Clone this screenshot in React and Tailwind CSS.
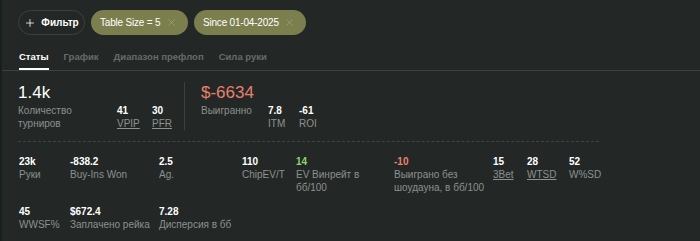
import { X, Plus } from "lucide-react";

const row = [
  { v: "23k", l: "Руки" },
  { v: "-838.2", l: "Buy-Ins Won" },
  { v: "2.5", l: "Ag." },
  { v: "110", l: "ChipEV/T" },
  { v: "14", l: "EV Винрейт в бб/100", c: "text-[#8fd46c]" },
  { v: "-10", l: "Выиграно без шоудауна, в бб/100", c: "text-[#e6806f]" },
  { v: "15", l: "3Bet", u: true },
  { v: "28", l: "WTSD", u: true },
  { v: "52", l: "W%SD" },
  { v: "45", l: "WWSF%" },
  { v: "$672.4", l: "Заплачено рейка" },
  { v: "7.28", l: "Дисперсия в бб" },
];

function Chip({ text, w }) {
  return (
    <div className={`flex h-[25px] items-center justify-between rounded-full bg-[#7b7f4e] pl-[9px] pr-[11px] text-[10px] tracking-[-0.2px] text-white ${w}`}>
      <span>{text}</span>
      <X className="h-[11px] w-[11px] text-[#a3a67c]" strokeWidth={1.5} />
    </div>
  );
}

export default function App() {
  return (
    <div
      className="h-[241px] w-[700px] overflow-hidden border-l-2 border-[#18201c] bg-[#232826] text-white"
      style={{ fontFamily: "'Liberation Sans', Arial, sans-serif" }}
    >
      {/* filters */}
      <div className="flex gap-[6px] pl-[16px] pt-[10px]">
        <button className="flex h-[25px] w-[67px] items-center justify-center rounded-full border border-[#3b413e] text-[10px] font-bold">
          <Plus className="mr-[5px] h-[12px] w-[12px]" strokeWidth={1.6} />
          Фильтр
        </button>
        <Chip text="Table Size = 5" w="w-[97px]" />
        <Chip text="Since 01-04-2025" w="w-[112px]" />
      </div>

      {/* tabs */}
      <div className="mt-[15px] flex gap-[15px] border-b border-[#3d4340] pl-[17px] text-[9.5px] font-bold">
        <div className="border-b-2 border-white pb-[4px] text-white">Статы</div>
        <div className="text-[#666c69]">График</div>
        <div className="text-[#666c69]">Диапазон префлоп</div>
        <div className="text-[#666c69]">Сила руки</div>
      </div>

      {/* summary */}
      <div className="ml-[16px] w-[581px] border-b border-dashed border-[#3f4542] pb-[11px] pt-[11px]">
        <div className="flex">
          <div className="w-[167px] border-r border-[#3b413e] pr-[10px]">
            <div className="text-[17px] leading-[22px]">1.4k</div>
            <div className="flex text-[10px] leading-[13px]">
              <div className="w-[99px] text-[#8b918e]">Количество турниров</div>
              <div className="w-[35px]">
                <div className="font-bold">41</div>
                <div className="text-[#8b918e] underline">VPIP</div>
              </div>
              <div>
                <div className="font-bold">30</div>
                <div className="text-[#8b918e] underline">PFR</div>
              </div>
            </div>
          </div>
          <div className="pl-[16px]">
            <div className="text-[17px] leading-[22px] text-[#e6806f]">$-6634</div>
            <div className="flex text-[10px] leading-[13px]">
              <div className="w-[67px] text-[#8b918e]">Выигранно</div>
              <div className="w-[31px]">
                <div className="font-bold">7.8</div>
                <div className="text-[#8b918e]">ITM</div>
              </div>
              <div>
                <div className="font-bold">-61</div>
                <div className="text-[#8b918e]">ROI</div>
              </div>
            </div>
          </div>
        </div>
      </div>

      {/* details */}
      <div className="ml-[17px] mt-[13px] grid grid-cols-[51px_89px_83px_54px_98px_99px_34px_42px_60px] gap-y-[11px] text-[10px] leading-[13px]">
        {row.map((s, i) => (
          <div key={i} className="pr-[4px]">
            <div className={`font-bold ${s.c || "text-white"}`}>{s.v}</div>
            <div className={`text-[#8b918e] ${s.u ? "underline" : ""}`}>{s.l}</div>
          </div>
        ))}
      </div>
    </div>
  );
}
